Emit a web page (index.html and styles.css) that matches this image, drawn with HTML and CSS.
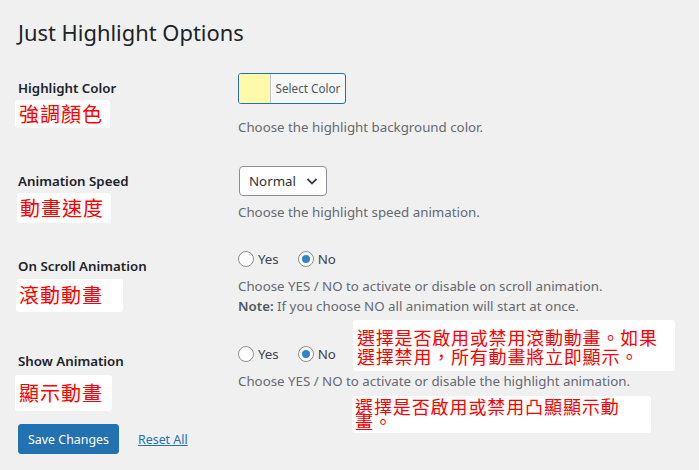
FILE: index.html
```html
<!DOCTYPE html>
<html lang="en">
<head>
<meta charset="utf-8">
<title>Just Highlight Options</title>
<link rel="stylesheet" href="styles.css">
</head>
<body>
<div class="wrap">
  <h1 class="title">Just Highlight Options</h1>
  <form class="form">
    <div class="row row-color">
      <div class="th">Highlight Color</div>
      <div class="td">
        <button type="button" class="color-btn"><span class="swatch"></span><span class="color-text">Select Color</span></button>
        <p class="desc desc-color">Choose the highlight background color.</p>
      </div>
    </div>
    <div class="row row-speed">
      <div class="th">Animation Speed</div>
      <div class="td">
        <div class="select">
          <span>Normal</span>
          <svg class="chev" width="14" height="14" viewBox="0 0 14 14"><path d="M2.5 5 L7 9.5 L11.5 5" fill="none" stroke="#3c434a" stroke-width="1.8"/></svg>
        </div>
        <p class="desc">Choose the highlight speed animation.</p>
      </div>
    </div>
    <div class="row row-scroll">
      <div class="th">On Scroll Animation</div>
      <div class="td">
        <div class="radios">
          <label class="radio"><span class="circle"></span>Yes</label>
          <label class="radio"><span class="circle checked"></span>No</label>
        </div>
        <p class="desc">Choose YES / NO to activate or disable on scroll animation.</p>
        <p class="desc note"><b>Note:</b> If you choose NO all animation will start at once.</p>
      </div>
    </div>
    <div class="row row-show">
      <div class="th">Show Animation</div>
      <div class="td">
        <div class="radios">
          <label class="radio"><span class="circle"></span>Yes</label>
          <label class="radio"><span class="circle checked"></span>No</label>
        </div>
        <p class="desc">Choose YES / NO to activate or disable the highlight animation.</p>
      </div>
    </div>
    <div class="submit">
      <button type="button" class="save">Save Changes</button>
      <a class="reset" href="#">Reset All</a>
    </div>
  </form>

  <div class="note-box nb-1">強調顏色</div>
  <div class="note-box nb-2">動畫速度</div>
  <div class="note-box nb-3">滾動動畫</div>
  <div class="note-box nb-4">顯示動畫</div>
  <div class="note-box nb-5">選擇是否啟用或禁用滾動動畫。如果選擇禁用，所有動畫將立即顯示。</div>
  <div class="note-box nb-6">選擇是否啟用或禁用凸顯顯示動畫。</div>
</div>
</body>
</html>
```

FILE: styles.css
```css
html, body {
  margin: 0;
  padding: 0;
  background: #f0f0f1;
}
body {
  font-family: "Noto Sans", "Open Sans", sans-serif;
  color: #3c434a;
  font-size: 13.3px;
  width: 699px;
  height: 470px;
  overflow: hidden;
}
.wrap {
  position: relative;
  padding: 0 0 0 18px;
  height: 470px;
}
.title {
  margin: 0;
  padding-top: 18px;
  font-size: 21.9px;
  font-weight: 400;
  line-height: 30px;
  color: #1d2327;
}
.form {
  margin-top: 11px;
}
.row {
  display: grid;
  grid-template-columns: 220px 1fr;
}
.th {
  font-weight: 600;
  color: #1d2327;
  font-size: 13.3px;
  line-height: 18px;
  padding-top: 20px;
}
.td {
  padding-top: 14px;
}
.row-color { height: 93px; }
.row-speed { height: 85px; }
.row-scroll { height: 95px; }
.row-show { height: 77px; }

.desc {
  margin: 0;
  color: #646970;
  font-size: 13.3px;
  line-height: 20px;
}
.desc-color { margin-top: 13px; }
.note { margin-top: 0; }
.note b { font-weight: 600; color: #50575e; }

.color-btn {
  display: flex;
  align-items: stretch;
  padding: 0;
  height: 31px;
  width: 108px;
  border: 1px solid #2271b1;
  border-radius: 3px;
  background: #f6f7f7;
  overflow: hidden;
  font-family: inherit;
}
.swatch {
  width: 31px;
  background: #fffaaa;
  border-right: 1px solid #c3c4c7;
}
.color-text {
  flex: 1;
  font-size: 11.7px;
  color: #50575e;
  line-height: 29px;
  text-align: center;
}

.select {
  display: flex;
  align-items: center;
  justify-content: space-between;
  box-sizing: border-box;
  width: 88px;
  height: 30px;
  margin-left: 1px;
  padding: 0 7px 0 9px;
  background: #fff;
  border: 1px solid #8c8f94;
  border-radius: 4px;
  color: #2c3338;
  font-size: 13.3px;
  margin-bottom: 6px;
}

.radios {
  display: flex;
  gap: 19px;
  height: 16px;
  margin-bottom: 9px;
}
.radio {
  display: flex;
  align-items: center;
  gap: 4px;
  color: #3c434a;
  font-size: 13.3px;
  line-height: 16px;
}
.circle {
  box-sizing: border-box;
  width: 16px;
  height: 16px;
  border: 1px solid #8c8f94;
  border-radius: 50%;
  background: #fff;
  display: flex;
  align-items: center;
  justify-content: center;
}
.circle.checked::after {
  content: "";
  width: 8px;
  height: 8px;
  border-radius: 50%;
  background: #3582c4;
}

.submit {
  display: flex;
  align-items: center;
  gap: 19px;
  margin-top: 15px;
}
.save {
  height: 30px;
  width: 101px;
  padding: 0;
  border: 1px solid #2271b1;
  border-radius: 3px;
  background: #2271b1;
  color: #fff;
  font-family: inherit;
  font-size: 12.4px;
}
.reset {
  color: #2271b1;
  font-size: 12.4px;
  text-decoration: underline;
}

.note-box {
  position: absolute;
  background: #fff;
  border-radius: 3px;
  color: #ff0000;
  font-family: "Noto Sans CJK TC", "Noto Sans CJK SC", sans-serif;
  box-sizing: border-box;
}
.nb-1, .nb-2, .nb-3, .nb-4 {
  font-size: 20px;
  letter-spacing: 1px;
  line-height: 26px;
  padding-left: 4px;
}
.nb-1 { left: 15px; top: 100px; width: 95px; height: 28px; padding-top: 1px; }
.nb-2 { left: 17px; top: 193px; width: 94px; height: 30px; padding-top: 2px; padding-left: 3px; }
.nb-3 { left: 16px; top: 279px; width: 107px; height: 33px; padding-top: 3px; padding-left: 3px; }
.nb-4 { left: 15px; top: 375px; width: 97px; height: 36px; padding-top: 5px; }
.nb-5 {
  left: 353px; top: 320px; width: 322px; height: 51px;
  font-size: 18px; letter-spacing: 0.8px; line-height: 19px;
  padding: 8px 0 0 4px;
}
.nb-6 {
  left: 352px; top: 396px; width: 299px; height: 37px;
  font-size: 18px; letter-spacing: 0.9px; line-height: 15px;
  padding: 3px 20px 0 3px;
}
```
